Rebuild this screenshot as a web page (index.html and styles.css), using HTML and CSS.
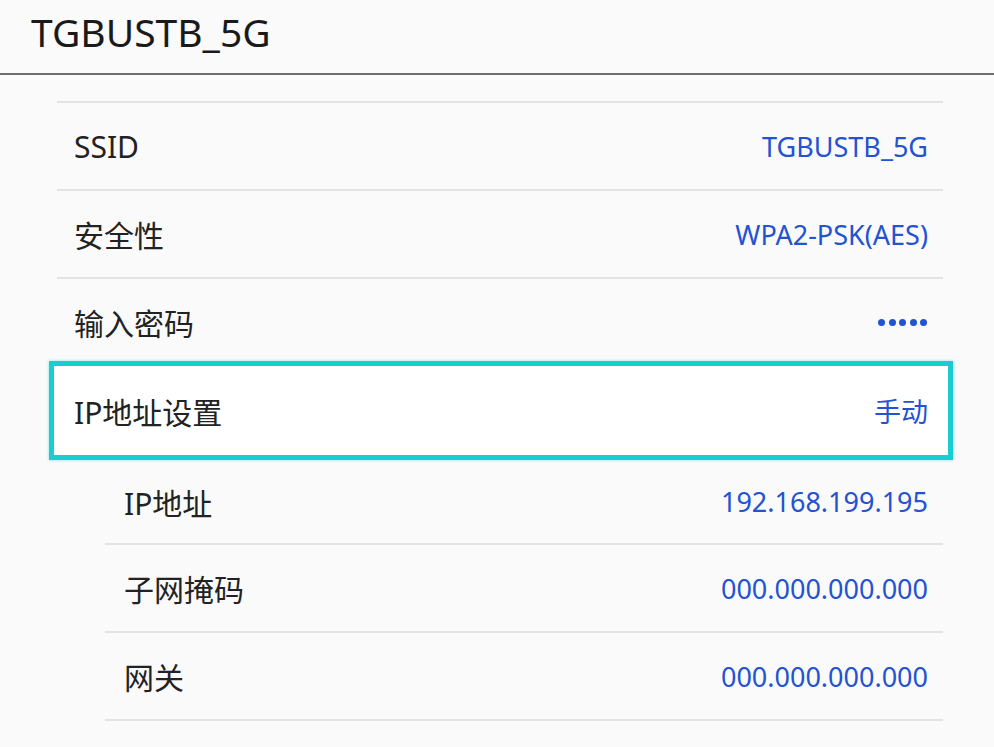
FILE: index.html
```html
<!DOCTYPE html>
<html lang="zh-CN">
<head>
    <meta charset="UTF-8">
    <meta name="viewport" content="width=device-width, initial-scale=1.0">
    <title>TGBUSTB_5G</title>
    <link rel="stylesheet" href="styles.css">
</head>
<body>
    <div class="header">
        <h1>TGBUSTB_5G</h1>
    </div>

    <div class="list">
        <div class="row">
            <span class="label">SSID</span>
            <span class="value">TGBUSTB_5G</span>
        </div>
        <div class="row">
            <span class="label">安全性</span>
            <span class="value">WPA2-PSK(AES)</span>
        </div>
        <div class="row">
            <span class="label">输入密码</span>
            <span class="dots"><i></i><i></i><i></i><i></i><i></i></span>
        </div>
        <div class="row focused">
            <span class="label">IP地址设置</span>
            <span class="value">手动</span>
        </div>
        <div class="row sub first-sub">
            <span class="label">IP地址</span>
            <span class="value">192.168.199.195</span>
        </div>
        <div class="row sub">
            <span class="label">子网掩码</span>
            <span class="value">000.000.000.000</span>
        </div>
        <div class="row sub">
            <span class="label">网关</span>
            <span class="value">000.000.000.000</span>
        </div>
    </div>
</body>
</html>
```

FILE: styles.css
```css
body {
    margin: 0;
    padding: 0;
    background-color: #fafafa;
    font-family: "Noto Sans", "Noto Sans CJK SC", sans-serif;
    color: #222;
    overflow: hidden;
}
.header {
    height: 73px;
    border-bottom: 2px solid #6e6e6e;
}
.header h1 {
    margin: 0;
    padding: 11px 0 0 31px;
    font-size: 39px;
    line-height: 42px;
    font-weight: normal;
    color: #1a1a1a;
}
.list {
    margin: 26px 51px 0 57px;
    border-top: 2px solid #e3e3e3;
}
.row {
    display: flex;
    justify-content: space-between;
    align-items: center;
    height: 86px;
    padding: 0 15px 0 17px;
    border-bottom: 2px solid #e3e3e3;
}
.label {
    font-size: 30px;
    color: #222;
}
.value {
    font-size: 27px;
    color: #2352d2;
}
.dots {
    display: flex;
    gap: 3.5px;
    padding-right: 1px;
}
.dots i {
    display: block;
    width: 7px;
    height: 7px;
    border-radius: 50%;
    background-color: #2352d2;
}
.row.focused {
    margin: -6px -10px 0 -8px;
    height: 89px;
    padding: 0 20px 0 20px;
    border: 5px solid #19cdd0;
    background-color: #fff;
    box-shadow: 0 0 3px rgba(25, 205, 208, 0.5);
}
.row.sub {
    margin-left: 48px;
    padding-left: 19px;
}
.row.first-sub {
    height: 83px;
}
```
